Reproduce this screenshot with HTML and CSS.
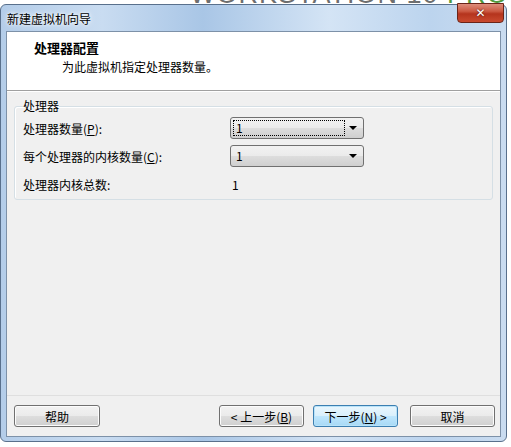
FILE: index.html
```html
<!DOCTYPE html>
<html lang="zh-CN">
<head>
  <meta charset="UTF-8">
  <title>新建虚拟机向导</title>
  <link rel="stylesheet" href="styles.css">
</head>
<body>
  <div class="brand">WORKSTATION 10 <span class="pro">PRO</span></div>

  <div class="window">
    <div class="titlebar">
      <span class="title">新建虚拟机向导</span>
      <button class="close">✕</button>
    </div>

    <div class="client">
      <div class="header">
        <div class="head-title">处理器配置</div>
        <div class="head-sub">为此虚拟机指定处理器数量。</div>
      </div>

      <div class="content">
        <fieldset class="group">
          <legend>处理器</legend>
          <div class="rows">
            <label>处理器数量(<u>P</u>):</label>
            <div class="combo focused"><span class="val">1</span><span class="arrow"></span></div>

            <label>每个处理器的内核数量(<u>C</u>):</label>
            <div class="combo"><span class="val">1</span><span class="arrow"></span></div>

            <label>处理器内核总数:</label>
            <span class="total">1</span>
          </div>
        </fieldset>
      </div>

      <div class="footer">
        <button class="btn">帮助</button>
        <button class="btn back">&lt; 上一步(<u>B</u>)</button>
        <button class="btn default">下一步(<u>N</u>) &gt;</button>
        <button class="btn">取消</button>
      </div>
    </div>
  </div>
</body>
</html>
```

FILE: styles.css
```css
body { margin: 0; background: #fff; font-family: "Noto Sans CJK SC", "DejaVu Sans", sans-serif; font-size: 12px; color: #000; overflow: hidden; }

.brand { position: absolute; top: -21px; left: 190px; width: 318px; overflow: hidden; font: 27px "Liberation Sans", sans-serif; letter-spacing: 1px; color: #6e6e6e; white-space: nowrap; }
.brand .pro { color: #4f9a3c; }

.window { position: relative; margin-top: 4px; width: 507px; height: 438px; box-sizing: border-box; border: 1px solid #59708c; border-radius: 6px; padding: 0 5px 4px 5px; display: flex; flex-direction: column;
  background: linear-gradient(90deg, #b4cde9 0%, #c9dcf1 20%, #a9c6e6 40%, #d4e4f5 65%, #bcd4ee 85%, #cadcf0 100%); }

.titlebar { height: 26px; display: flex; align-items: center; }
.title { padding-left: 1px; padding-top: 1px; color: #000; text-shadow: 0 0 6px #fff, 0 0 3px #fff; }
.close { position: absolute; top: -2px; right: 2px; width: 47px; height: 20px; border: 1px solid #6b2418; border-radius: 0 0 4px 4px;
  background: linear-gradient(#dd8d7b 0%, #cc5a43 40%, #b5341d 55%, #c94a2f 100%); color: #fff; font: bold 12px "DejaVu Sans", sans-serif; line-height: 18px; padding: 0; text-shadow: 0 0 2px #3a0a00; }

.client { flex: 1; display: flex; flex-direction: column; border: 1px solid #7d91a8; background: #f0f0f0; }

.header { background: #fff; border-bottom: 1px solid #a0a0a0; padding: 7px 0 0 27px; box-sizing: border-box; height: 59px; }
.head-title { font-weight: bold; font-size: 13px; line-height: 17px; }
.head-sub { margin-top: 3px; padding-left: 28px; line-height: 16px; }

.content { flex: 1; padding: 6px 7px 0 7px; border-top: 1px solid #fff; }

.group { margin: 0; padding: 0 8px 4px 8px; border: 1px solid #d5dfe5; border-radius: 3px; box-shadow: inset 1px 1px 0 #fff; }
.group legend { padding: 0; margin-left: 0; line-height: 16px; }

.rows { display: grid; grid-template-columns: 207px 134px; grid-auto-rows: 22px; row-gap: 6px; align-items: center; margin-top: 3px; }
.rows u { text-decoration: underline; }

.combo { position: relative; height: 22px; box-sizing: border-box; border: 1px solid #707070; border-radius: 3px; background: linear-gradient(#f2f2f2 0%, #ebebeb 48%, #dddddd 52%, #cfcfcf 100%); display: flex; align-items: center; }
.combo .val { flex: 1; padding-left: 3px; margin: 2px 18px 2px 2px; line-height: 16px; }
.combo.focused .val { outline: 1px dotted #000; outline-offset: -1px; }
.combo .arrow { position: absolute; right: 6px; top: 8px; width: 0; height: 0; border-left: 4px solid transparent; border-right: 4px solid transparent; border-top: 4px solid #000; }
.total { padding-left: 2px; }

.footer { display: flex; align-items: center; padding: 9px 5px 9px 7px; border-top: 1px solid #dfdfdf; }
.btn { width: 85px; height: 22px; box-sizing: border-box; padding: 0; border: 1px solid #707070; border-radius: 3px; font: 12px "Noto Sans CJK SC", sans-serif; color: #000;
  background: linear-gradient(#f2f2f2 0%, #ebebeb 48%, #dddddd 52%, #cfcfcf 100%); box-shadow: inset 0 0 0 1px #fcfcfc; }
.btn:first-child { width: 86px; }
.btn.back { margin-left: auto; }
.btn.default { margin-left: 9px; margin-right: 12px; border-color: #3c7fb1; background: linear-gradient(#eaf6fd 0%, #d9f0fc 48%, #bee6fd 52%, #a7d9f5 100%); box-shadow: inset 0 0 0 1px #b9e3f9; }
```
